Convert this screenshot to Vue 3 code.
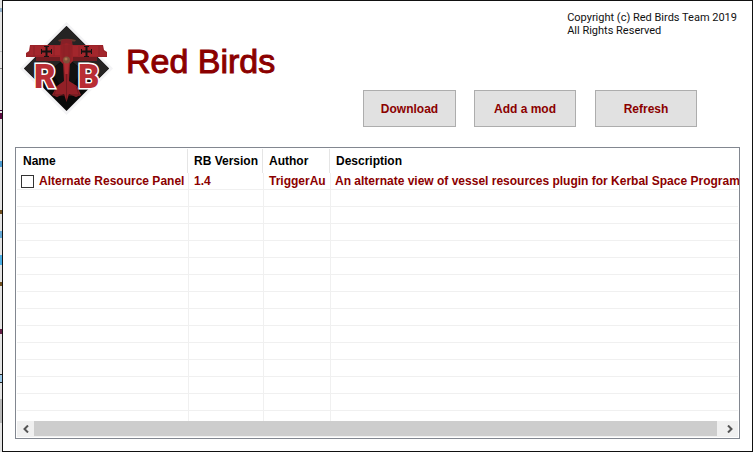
<script setup>
import { ref } from 'vue'

const mods = ref([
  {
    name: 'Alternate Resource Panel',
    version: '1.4',
    author: 'TriggerAu',
    description: 'An alternate view of vessel resources plugin for Kerbal Space Program',
    checked: false,
  },
])
const emptyRows = 13
</script>

<template>
  <div class="desktop">
    <div class="backdrop" aria-hidden="true"></div>
    <main class="window">
      <header class="top">
        <svg class="logo" viewBox="20 22 93 93" role="img" aria-label="RB">
          <path d="M66.500 22 113 68.500 66.500 115 20 68.500Z" fill="#f3f3f5" />
          <path d="M66.500 26 109 68.500 66.500 111 24 68.500Z" fill="#090909" />
          <path d="M66.500 26 109 68.500 96 81 66.500 57 37 81 24 68.500Z" fill="#252323" />
          <path d="M66.500 58 82 70 66.500 96 51 70Z" fill="#111" />
          <path d="M58 40Q66.500 37.500 76 40L75 41.500H59Z" fill="#66382d" />
          <path d="M61 41 64 39H69L72 41 73 47H60Z" fill="#862027" />
          <path d="M30 45H61L66.500 43 72 45H103L104 50 107 52V57H97V61H73L69 65H64L60 61H36V57H26V53L29 51Z" fill="#9b2228" />
          <path d="M31 46H60V55H28L30 52ZM73 46H102L103 51 106 53V56H73Z" fill="#a3262c" />
          <path d="M61 45H72L71 62H62Z" fill="#922127" />
          <path d="M36 57H60V61H36ZM73 57H97V61H73Z" fill="#701b20" />
          <path d="M34 46V56M54 46V56M79 46V56M99 46V56M64 43V57M69 43V57" stroke="#8c2026" />
          <path d="M63 62H70L69 81 77 86 81 95 76 97 69 94 66.500 102 64 94 57 97 52 95 57 86 64 81Z" fill="#932027" />
          <path d="M64 63H69L68 74H65Z" fill="#b12c32" />
          <path d="M66.500 74V101M57 86 54 95M76 86 79 95" stroke="#74191f" />
          <path d="M53 95H64M69 95H80" stroke="#651a1e" />
          <circle cx="66.500" cy="60" r="3.500" fill="#80513b" />
          <circle cx="66" cy="59" r="1.500" fill="#ad7550" />
          <g stroke="#171212" stroke-width="2">
            <path d="M41 51.500H52M46.500 46V57M81 51.500H92M86.500 46V57" />
            <path d="M41.500 49V54M51.500 49V54M44 46.500H49M44 56.500H49M81.500 49V54M91.500 49V54M84 46.500H89M84 56.500H89" stroke-width="1" />
          </g>
          <text x="34" y="88" class="letter">R</text>
          <text x="78" y="88" class="letter">B</text>
        </svg>
        <h1 class="title">Red Birds</h1>
        <div class="side">
          <p class="copyright">Copyright (c) Red Birds Team 2019<br />All Rights Reserved</p>
          <nav class="actions">
            <button type="button" class="action short">Download</button>
            <button type="button" class="action">Add a mod</button>
            <button type="button" class="action last">Refresh</button>
          </nav>
        </div>
      </header>

      <section class="panel">
        <div class="viewport">
          <table class="mods">
            <colgroup>
              <col class="c-name" />
              <col class="c-version" />
              <col class="c-author" />
              <col />
            </colgroup>
            <thead>
              <tr>
                <th scope="col">Name</th>
                <th scope="col">RB Version</th>
                <th scope="col">Author</th>
                <th scope="col">Description</th>
              </tr>
            </thead>
            <tbody>
              <tr v-for="mod in mods" :key="mod.name">
                <td class="name">
                  <label><input v-model="mod.checked" type="checkbox" />{{ mod.name }}</label>
                </td>
                <td>{{ mod.version }}</td>
                <td>{{ mod.author }}</td>
                <td>{{ mod.description }}</td>
              </tr>
              <tr v-for="n in emptyRows" :key="n">
                <td></td><td></td><td></td><td></td>
              </tr>
              <tr class="partial"><td></td><td></td><td></td><td></td></tr>
            </tbody>
          </table>
        </div>
        <div class="scrollbar">
          <button type="button" class="arrow left" aria-label="Scroll left">
            <svg viewBox="0 0 6 8"><path d="M5 0.500 1.500 4 5 7.500" /></svg>
          </button>
          <div class="thumb"></div>
          <button type="button" class="arrow right" aria-label="Scroll right">
            <svg viewBox="0 0 6 8"><path d="M1 0.500 4.500 4 1 7.500" /></svg>
          </button>
        </div>
      </section>
    </main>
  </div>
</template>

<style>
body {
  margin: 0;
  background: #fff;
}
</style>

<style scoped>
* {
  box-sizing: border-box;
}
.desktop {
  display: flex;
  font-family: "Liberation Sans", Arial, sans-serif;
  font-size: 12px;
  line-height: 16px;
}
.backdrop {
  flex: 0 0 2px;
  background: linear-gradient(
    #e4e4e4 8px, #8eaec8 8px 12px, #e4e4e4 12px 51px, #bbb 51px 52px, #e4e4e4 52px 68px,
    #888 68px 69px, #e4e4e4 69px 110px, #3a0038 110px 111px, #e4e4e4 111px 113px,
    #5a0a40 113px 119px, #e4e4e4 119px 161px, #4c9bd0 161px 167px, #e4e4e4 167px 210px,
    #705020 210px 214px, #e4e4e4 214px 231px, #65a9d6 231px 238px, #e4e4e4 238px 255px,
    #4bafe5 255px 265px, #e4e4e4 265px 282px, #705020 282px 286px, #e4e4e4 286px 329px,
    #642047 329px 334px, #e4e4e4 334px 374px, #222 374px 375px, #9cc9e8 375px 382px,
    #222 382px 383px, #e4e4e4 383px 399px, #b8b8b8 399px 423px, #e4e4e4 423px
  );
}
.window {
  flex: 1;
  min-width: 0;
  padding: 0 12px 12px;
  border: 1px solid #111;
  background: #fff;
}
.top {
  display: flex;
  height: 146px;
}
.logo {
  flex: none;
  width: 93px;
  height: 93px;
  margin: 21px 0 0 5px;
}
.letter {
  font-family: Roboto, sans-serif;
  font-size: 33px;
  font-weight: 900;
  fill: #b92d34;
  stroke: #fff;
  stroke-width: 3px;
  paint-order: stroke;
}
.title {
  margin: 40px 0 0 13px;
  font-size: 34px;
  font-weight: 400;
  line-height: 40px;
  white-space: nowrap;
  color: #8b0000;
  -webkit-text-stroke: 1px #8b0000;
}
.side {
  display: flex;
  flex: 1;
  flex-direction: column;
  align-items: flex-end;
}
.copyright {
  margin: 10px 3px 0 0;
  font-family: Roboto, "Liberation Sans", sans-serif;
  font-size: 11px;
  line-height: 13px;
  color: #111;
  white-space: nowrap;
}
.actions {
  display: flex;
  margin: 53px 43px 0 0;
}
.action {
  width: 102px;
  height: 37px;
  margin-left: 18px;
  padding: 0;
  border: 1px solid #adadad;
  background: #e1e1e1;
  color: #8b0000;
  font: bold 12px "Liberation Sans", Arial, sans-serif;
}
.action.short {
  width: 93px;
}
.action.last {
  margin-left: 19px;
}
.panel {
  padding: 0 1px 1px;
  border: 1px solid #828790;
}
.viewport {
  margin-right: -1px;
  padding-right: 1px;
  overflow: hidden;
}
.mods {
  width: 100%;
  border-spacing: 0;
  table-layout: fixed;
  font-weight: bold;
}
.c-name {
  width: 172px;
}
.c-version {
  width: 75px;
}
.c-author {
  width: 67px;
}
th,
td {
  padding: 0 0 0 5px;
  text-align: left;
  white-space: nowrap;
}
th {
  height: 25px;
  color: #000;
}
th:first-child {
  padding-left: 6px;
}
th:not(:last-child) {
  background: linear-gradient(#e5e5e5, #e5e5e5) right 1px top 1px / 1px 24px no-repeat;
}
td {
  height: 17px;
  border-right: 1px solid #f0f0f0;
  border-bottom: 1px solid #f0f0f0;
  line-height: 15px;
  padding-top: 1px;
  color: #8b0000;
}
td:last-child {
  padding-left: 4px;
  border-right: 0;
}
.partial td {
  height: 10px;
  border-bottom: 0;
}
.name {
  padding-left: 4px;
}
.name label {
  display: flex;
  align-items: center;
  gap: 5px;
}
.name input {
  appearance: none;
  flex: none;
  width: 13px;
  height: 13px;
  margin: 0;
  border: 1px solid #333;
  background: #fff;
}
.name input:checked {
  background: #333;
}
.scrollbar {
  display: flex;
  height: 16px;
  background: #f0f0f0;
}
.thumb {
  flex: 1;
  height: 15px;
  background: #cdcdcd;
}
.arrow {
  display: flex;
  align-items: center;
  justify-content: center;
  width: 17px;
  height: 15px;
  padding: 0;
  border: 0;
  background: #f0f0f0;
}
.arrow.right {
  width: 21px;
  padding-left: 4px;
}
.arrow svg {
  width: 6px;
  height: 8px;
  fill: none;
  stroke: #555;
  stroke-width: 2px;
}
</style>
